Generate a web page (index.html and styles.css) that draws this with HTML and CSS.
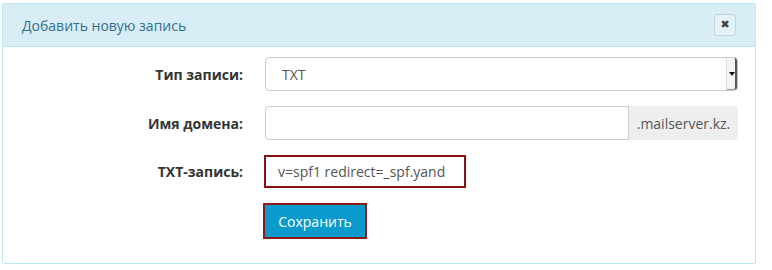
FILE: index.html
```html
<!DOCTYPE html>
<html lang="ru">
<head>
    <meta charset="UTF-8">
    <title>Добавить новую запись</title>
    <link rel="stylesheet" href="styles.css">
</head>
<body>
    <div class="panel">
        <div class="panel-heading">
            <span class="panel-title">Добавить новую запись</span>
            <button class="close-btn" type="button">&#10006;</button>
        </div>
        <form class="panel-body">
            <label class="form-label">Тип записи:</label>
            <div class="select-box">
                <span class="select-value">TXT</span>
                <span class="select-arrow"></span>
            </div>

            <label class="form-label">Имя домена:</label>
            <div class="input-group">
                <input type="text" class="form-input">
                <span class="input-addon">.mailserver.kz.</span>
            </div>

            <label class="form-label">TXT-запись:</label>
            <div>
                <input type="text" class="form-input txt-input" value="v=spf1 redirect=_spf.yandex.net">
            </div>

            <div></div>
            <div>
                <button type="submit" class="save-btn">Сохранить</button>
            </div>
        </form>
    </div>
</body>
</html>
```

FILE: styles.css
```css
* {
    margin: 0;
    padding: 0;
    box-sizing: border-box;
}

body {
    font-family: "Open Sans", "Liberation Sans", Arial, sans-serif;
    font-size: 14px;
    color: #333;
    background-color: #fff;
}

.panel {
    margin: 3px 0 0 2px;
    width: 754px;
    height: 261px;
    border: 1px solid #bce8f1;
    border-radius: 2px;
    background-color: #fff;
}

.panel-heading {
    height: 43px;
    display: flex;
    align-items: center;
    justify-content: space-between;
    padding: 0 19px 0 19px;
    background-color: #d9edf7;
    border-bottom: 1px solid #bce8f1;
}

.panel-title {
    color: #31708f;
    font-size: 14px;
}

.close-btn {
    width: 22px;
    height: 22px;
    border: 1px solid #c6d3d9;
    border-radius: 3px;
    background-color: #e3f1f8;
    color: #444;
    font-size: 11px;
    line-height: 20px;
    font-family: "DejaVu Sans", sans-serif;
    cursor: pointer;
}

.panel-body {
    display: grid;
    grid-template-columns: 240px 473px;
    column-gap: 22px;
    row-gap: 15px;
    padding-top: 10px;
}

.form-label {
    font-weight: bold;
    text-align: right;
    align-self: center;
    color: #333;
}

.select-box {
    height: 34px;
    display: flex;
    align-items: center;
    justify-content: space-between;
    border: 1px solid #ccc;
    border-radius: 4px;
    padding-left: 16px;
    color: #555;
}

.select-arrow {
    width: 11px;
    height: 32px;
    border-left: 1px solid #e2e2e2;
    border-right: 2px solid #555;
    border-bottom: 1px solid #999;
    border-radius: 0 3px 3px 0;
    background-color: #f4f4f4;
    position: relative;
}

.select-arrow::after {
    content: "";
    position: absolute;
    left: 2px;
    top: 14px;
    border-left: 3px solid transparent;
    border-right: 3px solid transparent;
    border-top: 4px solid #111;
}

.input-group {
    display: flex;
    height: 34px;
}

.form-input {
    height: 34px;
    width: 100%;
    border: 1px solid #ccc;
    border-radius: 4px;
    padding: 0 12px;
    font-family: inherit;
    font-size: 14px;
    color: #555;
}

.input-group .form-input {
    flex: 1;
    border-radius: 4px 0 0 4px;
}

.input-addon {
    width: 109px;
    display: flex;
    align-items: center;
    justify-content: center;
    background-color: #eee;
    border-radius: 0 4px 4px 0;
    color: #555;
}

.txt-input {
    width: 202px;
    height: 33px;
    border: 2px solid #8b1010;
    border-radius: 0;
    margin-left: -1px;
    padding: 0 19px 0 12px;
}

.save-btn {
    width: 104px;
    height: 36px;
    margin-left: -2px;
    background-color: #0a9acc;
    color: #fff;
    border: 2px solid #8b1a1a;
    font-family: inherit;
    font-size: 14px;
    cursor: pointer;
}
```
